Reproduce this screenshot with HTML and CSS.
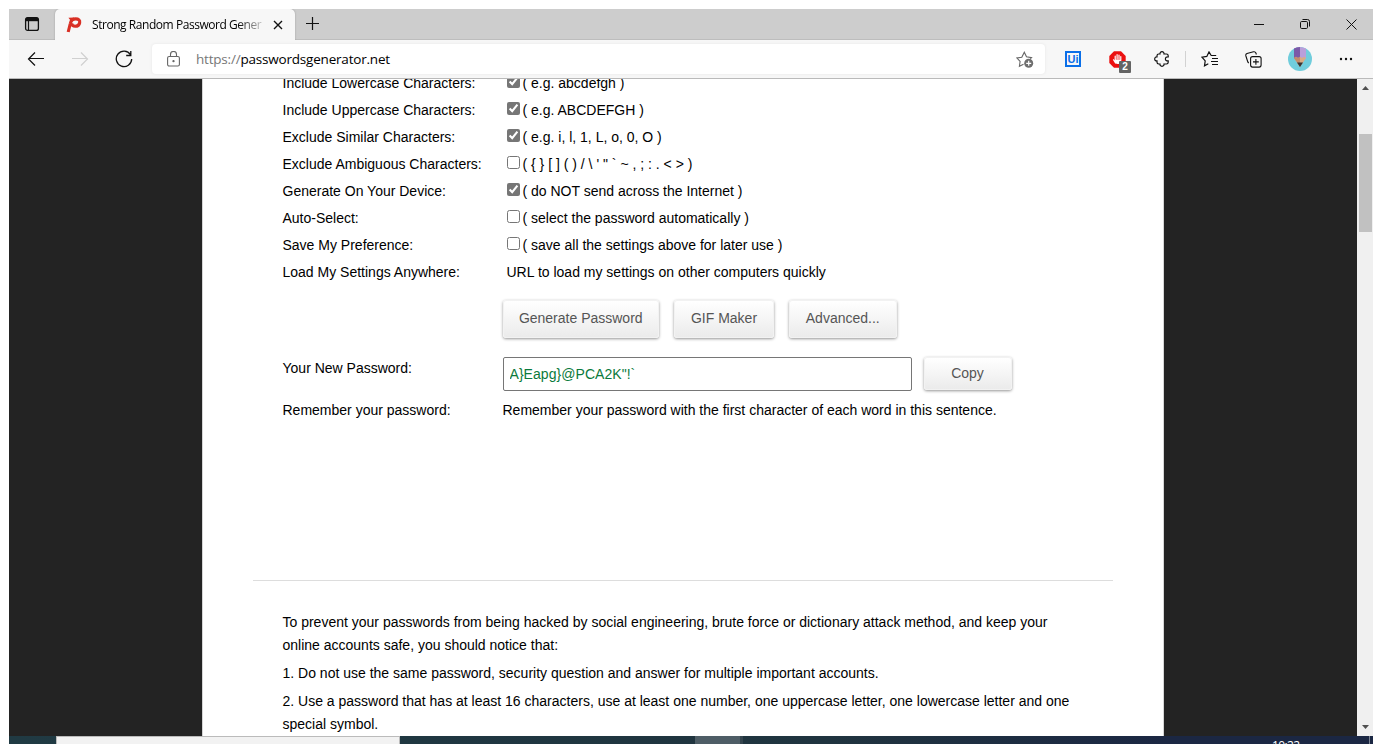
FILE: index.html
```html
<!DOCTYPE html>
<html lang="en">
<head>
<meta charset="utf-8">
<title>Strong Random Password Generator</title>
<link rel="stylesheet" href="styles.css">
</head>
<body>
<div class="window">
  <div class="titlebar">
    <div class="tab-actions">
      <svg width="16" height="16" viewBox="0 0 16 16" fill="none" stroke="#111"><rect x="1.6" y="1.6" width="12.8" height="12.8" rx="2" stroke-width="1.3"/><path d="M2 3.500h12" stroke-width="3.400"/><path d="M4.500 5v9" stroke-width="1.200"/></svg>
    </div>
    <div class="tab">
      <svg class="favicon" width="16" height="17" viewBox="0 0 16 17"><path d="M2.200 16L4.300 7.500C5 4.300 7 2.900 9.800 2.900c2.700 0 4.300 1.500 3.900 3.700-.4 2.400-2.200 3.700-4.500 3.700-2 0-3.500-1-3.400-3.100" fill="none" stroke="#d93025" stroke-width="3.100"/><path d="M2.400 1.700L8 1.400 5 5z" fill="#d93025"/></svg>
      <span class="tab-title">Strong Random Password Gener</span>
      <svg width="10" height="10" viewBox="0 0 10 10" stroke="#111" stroke-width="1.400"><path d="M1 1l8 8M9 1L1 9"/></svg>
    </div>
    <svg class="new-tab" width="14" height="14" viewBox="0 0 14 14" stroke="#111" stroke-width="1.200"><path d="M6.500 0v13M0 6.500h13"/></svg>
    <div class="window-controls">
      <svg width="10" height="10" viewBox="0 0 10 10" stroke="#111"><path d="M0 5.500h10"/></svg>
      <svg width="10" height="10" viewBox="0 0 10 10" fill="none" stroke="#111"><rect x=".5" y="2.500" width="7" height="7" rx="1.200"/><path d="M2.500.500h5a2 2 0 0 1 2 2v5"/></svg>
      <svg width="11" height="11" viewBox="0 0 11 11" stroke="#111"><path d="M.5.500l10 10M10.500.500l-10 10"/></svg>
    </div>
  </div>
  <div class="toolbar">
    <div class="nav">
      <svg width="18" height="16" viewBox="0 0 18 16" fill="none" stroke="#111" stroke-width="1.200"><path d="M8 1.500L1.500 8 8 14.500M1.500 7.500H17"/></svg>
      <svg width="18" height="16" viewBox="0 0 18 16" fill="none" stroke="#d0d0d0" stroke-width="1.200"><path d="M10 1.500L16.500 8 10 14.500M16.500 7.500H1"/></svg>
      <svg width="18" height="18" viewBox="0 0 18 18" fill="none" stroke="#111" stroke-width="1.300"><path d="M15.500 4.700A7.700 7.700 0 1 0 16.700 9M15.800 1v4.500h-4.600"/></svg>
    </div>
    <div class="address">
      <svg class="lock" width="13" height="16" viewBox="0 0 13 16" fill="none" stroke="#666" stroke-width="1.100"><rect x=".6" y="5.500" width="11.800" height="9.500" rx="1.500"/><path d="M3.500 5.500V3.500a3 3 0 0 1 6 0v2"/><circle cx="6.500" cy="10.200" r=".6" fill="#555"/></svg>
      <span class="url"><span class="scheme">https://</span>passwordsgenerator.net</span>
      <svg class="fav-add" width="18" height="18" viewBox="0 0 18 18" fill="none" stroke="#666" stroke-width="1.100"><path d="M7.500 14.200l-4.100 2 .7-4.700L1 8l4.800-.8L8.300 2.200l2.200 4.600 5 .8-1.300 1.200"/><circle cx="12.700" cy="13.300" r="4.500" fill="#6e6e6e" stroke="none"/><path d="M12.700 10.800v5M10.200 13.300h5" stroke="#fff" stroke-width="1.200"/></svg>
    </div>
    <div class="extensions">
      <span class="ui-ext">Ui</span>
      <span class="blocker">
        <svg width="17" height="17" viewBox="0 0 17 17"><path fill="#eb1010" d="M5 .3h7L16.700 5v7L12 16.700H5L.3 12V5z"/><path d="M6.200 9V5.200M8.100 8V3.700M10 8V4M11.800 9V5.500M4.500 8.800l2 3.200M6.200 8.500c0 3 .8 3.900 2.900 3.900s2.700-1.400 2.700-3.900" fill="#fff" stroke="#fff" stroke-width="1.200" stroke-linecap="round"/></svg>
        <span class="badge">2</span>
      </span>
      <svg class="puzzle" width="16" height="16" viewBox="0 0 16 16" fill="none" stroke="#111" stroke-width="1.200"><path d="M6 3c-.2-1.400.7-2.300 2-2.300s2.200.9 2 2.300h2.400q1.800 0 1.800 1.700v1.200c-1.700-.2-2.800.6-2.800 2s1.100 2.200 2.800 2v1.400q0 1.700-1.800 1.700H10c.2 1.400-.7 2.300-2 2.300S5.800 14.400 6 13H4.800Q3 13 3 11.300V9.900C1.600 10.100.7 9.200.7 7.900S1.600 5.700 3 5.900V4.700Q3 3 4.800 3z"/></svg>
      <span class="divider"></span>
      <svg class="favorites" width="18" height="16" viewBox="0 0 18 16" fill="none" stroke="#111" stroke-width="1.200"><path d="M7.300 12.800L3.500 14.800l.7-4.900L1 6.200l4.800-.8L8 .9l2.200 3.600h5M11 7.500h6M10 10.500h7M11 13.500h6"/></svg>
      <svg class="collections" width="17" height="17" viewBox="0 0 17 17" fill="none" stroke="#111" stroke-width="1.100"><rect x="5.600" y="5.600" width="10.500" height="10.500" rx="2"/><path d="M10.900 8v5.800M8 10.900h5.800M3.800 12Q2.900 11.500 2.500 10L.9 5Q.4 3.100 2 2.500L8.500.8q1.700-.4 2.400 1.200l.5 1.500"/></svg>
      <svg class="avatar" width="24" height="24" viewBox="0 0 24 24"><circle cx="12" cy="12" r="12" fill="#70cddc"/><path d="M6 1.600Q12-1.500 18 1.600V12H6z" fill="#b99fda"/><path d="M6 1.600Q8.500.2 12 0v12H6z" fill="#7b5aa8"/><path d="M6 11l2-1.200 2 1.200 2-1.200 2 1.200 2-1.200 2 1.200-6 9z" fill="#d9ac85"/><path d="M6 11l2-1.200 2 1.200 2-1.200V20z" fill="#c38d6b"/><path d="M9 15.500h6L12 20z" fill="#353535"/></svg>
      <svg class="more" width="14" height="4" viewBox="0 0 14 4" fill="#111"><circle cx="2" cy="2" r="1.200"/><circle cx="7" cy="2" r="1.200"/><circle cx="12" cy="2" r="1.200"/></svg>
    </div>
  </div>
  <div class="viewport">
    <main class="panel">
      <form class="settings">
        <label class="row"><span class="name">Include Lowercase Characters:</span><input type="checkbox" checked><span class="hint">( e.g. abcdefgh )</span></label>
        <label class="row"><span class="name">Include Uppercase Characters:</span><input type="checkbox" checked><span class="hint">( e.g. ABCDEFGH )</span></label>
        <label class="row"><span class="name">Exclude Similar Characters:</span><input type="checkbox" checked><span class="hint">( e.g. i, l, 1, L, o, 0, O )</span></label>
        <label class="row"><span class="name">Exclude Ambiguous Characters:</span><input type="checkbox"><span class="hint">( { } [ ] ( ) / \ ' " ` ~ , ; : . &lt; &gt; )</span></label>
        <label class="row"><span class="name">Generate On Your Device:</span><input type="checkbox" checked><span class="hint">( do NOT send across the Internet )</span></label>
        <label class="row"><span class="name">Auto-Select:</span><input type="checkbox"><span class="hint">( select the password automatically )</span></label>
        <label class="row"><span class="name">Save My Preference:</span><input type="checkbox"><span class="hint">( save all the settings above for later use )</span></label>
        <div class="row"><span class="name">Load My Settings Anywhere:</span><span>URL to load my settings on other computers quickly</span></div>
      </form>
      <div class="actions">
        <button class="btn generate">Generate Password</button>
        <button class="btn gif">GIF Maker</button>
        <button class="btn advanced">Advanced...</button>
      </div>
      <div class="result">
        <span class="result-name">Your New Password:</span>
        <input class="password" type="text" value="A}Eapg}@PCA2K&quot;!`">
        <button class="btn copy">Copy</button>
      </div>
      <div class="remember"><span class="result-name">Remember your password:</span><span>Remember your password with the first character of each word in this sentence.</span></div>
      <hr class="rule">
      <div class="tips">
        <p>To prevent your passwords from being hacked by social engineering, brute force or dictionary attack method, and keep your<br>online accounts safe, you should notice that:</p>
        <p>1. Do not use the same password, security question and answer for multiple important accounts.</p>
        <p>2. Use a password that has at least 16 characters, use at least one number, one uppercase letter, one lowercase letter and one<br>special symbol.</p>
      </div>
    </main>
    <div class="scrollbar">
      <svg width="16" height="16" viewBox="0 0 16 16" fill="#505050"><path d="M8.500 7L12 11H5z"/></svg>
      <span class="thumb"></span>
      <svg width="16" height="16" viewBox="0 0 16 16" fill="#505050"><path d="M5 5h7l-3.500 4z"/></svg>
    </div>
  </div>
  <div class="taskbar">
    <span class="search"></span>
    <span class="active-app"></span>
    <span class="clock">10:22</span>
    <span class="peek"></span>
  </div>
</div>
</body>
</html>
```
FILE: styles.css
```css
* { box-sizing: border-box; }
body {
  margin: 0;
  background: #fff;
  font-family: "Liberation Sans", Arial, sans-serif;
  font-size: 14px;
  color: #000;
}
svg { display: block; flex: none; }
.window {
  display: flex;
  flex-direction: column;
  width: 1364px;
  height: 735px;
  margin: 9px 0 0 9px;
  overflow: hidden;
}
.titlebar {
  display: flex;
  height: 31px;
  flex: none;
  background: #cdcdcd;
  border-bottom: 1px solid #bdbdbd;
  font-family: "Open Sans", "Noto Sans", sans-serif;
}
.tab-actions { width: 46px; padding: 7px 0 0 15px; }
.tab {
  display: flex;
  align-items: center;
  width: 240px;
  height: 31px;
  padding: 0 11px;
  background: #f7f7f7;
  border-radius: 5px 5px 0 0;
  box-shadow: 0 0 2px #999;
  clip-path: inset(0 -3px 0 -3px);
}
.tab-title {
  width: 174px;
  margin-left: 10px;
  margin-right: 7px;
  padding-bottom: 1px;
  overflow: hidden;
  white-space: nowrap;
  font-size: 12px;
  letter-spacing: -0.45px;
  mask-image: linear-gradient(90deg, #000 145px, transparent 176px);
}
.new-tab { margin: 8px 0 0 11px; }
.window-controls {
  display: flex;
  align-items: center;
  gap: 36px;
  margin-left: auto;
  padding-right: 16px;
}
.toolbar {
  display: flex;
  align-items: center;
  height: 39px;
  flex: none;
  background: #f7f7f7;
  border-bottom: 1px solid #bababa;
}
.nav { display: flex; align-items: center; gap: 26px; width: 143px; padding-left: 18px; }
.address {
  display: flex;
  align-items: center;
  width: 893px;
  height: 30px;
  padding: 0 11px 0 15px;
  background: #fff;
  border-radius: 4px;
  box-shadow: 0 0 3px #e4e4e4;
}
.url {
  flex: 1;
  margin-left: 16px;
  font-family: "Open Sans", "Noto Sans", sans-serif;
  font-size: 13.5px;
  letter-spacing: -0.2px;
}
.scheme { color: #777; }
.extensions { display: flex; align-items: center; flex: 1; }
.ui-ext {
  width: 16px;
  height: 16px;
  margin-left: 20px;
  border: 2px solid #0a6fe8;
  color: #0a6fe8;
  font: bold 11px/12px "Liberation Sans", sans-serif;
  text-align: center;
}
.blocker { position: relative; margin-left: 28px; }
.badge {
  position: absolute;
  left: 10px;
  top: 10px;
  width: 12px;
  height: 12px;
  border-radius: 1px;
  background: #646464;
  color: #fff;
  font: bold 10px/12px "Liberation Sans", sans-serif;
  text-align: center;
}
.puzzle { margin-left: 28px; }
.divider { width: 1px; height: 16px; margin-left: 15px; background: #d2d2d2; }
.favorites { margin-left: 15px; }
.collections { margin-left: 26px; }
.avatar { margin-left: 26px; }
.more { margin-left: 27px; }
.viewport {
  display: flex;
  height: 657px;
  flex: none;
  padding-left: 193px;
  overflow: hidden;
  background: #232323;
}
.panel {
  width: 962px;
  background: #fff;
  border: solid #d5d5d5;
  border-width: 0 1px;
}
.settings { display: flex; flex-direction: column; margin-top: -10px; padding-left: 79.5px; }
.row { display: flex; align-items: center; height: 27px; }
.name { width: 224px; }
.row input { width: 13px; height: 13px; margin: 0 3px 3px 0; accent-color: #767676; }
.actions { display: flex; gap: 15px; height: 40px; margin-top: 15px; padding-left: 299.5px; }
.btn {
  height: 38px;
  padding: 0 0 2px;
  border: 1px solid #f2f2f2;
  border-radius: 3px;
  background: linear-gradient(#fff, #ebebeb);
  box-shadow: 0 1px 3px rgba(0, 0, 0, .42);
  color: #555;
  font: 14px "Liberation Sans", Arial, sans-serif;
}
.generate { width: 156.500px; }
.gif { width: 100px; }
.advanced { width: 107.500px; }
.result { display: flex; height: 36px; margin-top: 16px; padding-left: 79.5px; }
.result-name { width: 220px; }
.result .result-name { padding-top: 4px; }
.password {
  width: 409px;
  height: 34px;
  margin: 1px 0 0;
  padding: 1px 6px;
  border: 1px solid #767676;
  border-radius: 2px;
  color: #0a7a3c;
  font: 14px "Liberation Sans", Arial, sans-serif;
  letter-spacing: 0.05px;
}
.copy { width: 88px; height: 33px; margin: 1px 0 0 12px; }
.remember { display: flex; margin-top: 10px; padding-left: 79.5px; }
.rule {
  width: 860px;
  height: 1px;
  margin: 162px 0 0 50px;
  border: 0;
  background: #ddd;
}
.tips { padding: 30px 0 0 79.5px; line-height: 23px; }
.tips p { margin: 0 0 5px; white-space: nowrap; }
.scrollbar {
  display: flex;
  flex-direction: column;
  width: 16px;
  margin-left: auto;
  background: #f0f0f0;
}
.thumb { width: 13px; height: 98px; margin: 39px 0 auto 2px; background: #c1c1c1; }
.taskbar {
  display: flex;
  height: 8px;
  overflow: hidden;
  background: linear-gradient(90deg, #203a43, #20343f 60%, #1b2743 85%);
}
.search { width: 344px; margin-left: 47px; background: #f2f2f2; border: 1px solid #bbb; border-bottom: 0; }
.active-app { width: 48px; margin-left: 295px; background: #4e5d66; border-right: 3px solid #35454e; }
.clock {
  margin-left: 529px;
  padding-top: 3px;
  color: #fff;
  font: 12px/14px "Open Sans", sans-serif;
  letter-spacing: -0.6px;
}
.peek { width: 1px; margin-left: auto; margin-right: 3px; background: #7b8494; }
```
